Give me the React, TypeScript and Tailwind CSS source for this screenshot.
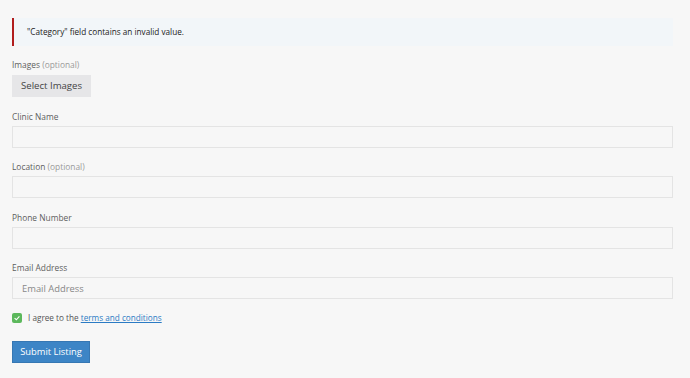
import { useState } from "react";

const fields = [
  { label: "Clinic Name", optional: false, placeholder: "", gap: "mt-[13px]" },
  { label: "Location", optional: true, placeholder: "", gap: "mt-[12px]" },
  { label: "Phone Number", optional: false, placeholder: "", gap: "mt-[13px]" },
  { label: "Email Address", optional: false, placeholder: "Email Address", gap: "mt-[12px]" },
];

export default function App() {
  const [agreed, setAgreed] = useState(true);

  return (
    <div className="min-h-screen bg-[#f7f7f7] text-[#333] font-['Open_Sans',sans-serif]">
      <div className="pl-[12px] pr-[17px] pt-[18px] pb-[15px]">
        {/* Error notice */}
        <div className="h-[28px] flex items-center bg-[#f2f6f9] border-l-2 border-[#b11d1d] pl-[13px]">
          <p className="text-[8.2px] text-[#222]">"Category" field contains an invalid value.</p>
        </div>

        {/* Images */}
        <div className="mt-[12px]">
          <label className="block text-[8.4px] leading-[14px] text-[#5e5e5e]">
            Images <span className="text-[#9a9a9a]">(optional)</span>
          </label>
          <button className="mt-[3px] block h-[22px] w-[79px] bg-[#e6e6e8] text-[9.6px] text-[#444]">
            Select Images
          </button>
        </div>

        {fields.map((f) => (
          <div key={f.label} className={f.gap}>
            <label className="block text-[8.4px] leading-[14px] text-[#5e5e5e]">
              {f.label} {f.optional && <span className="text-[#9a9a9a]">(optional)</span>}
            </label>
            <input
              type="text"
              placeholder={f.placeholder}
              className="mt-[2px] block h-[22px] w-full bg-[#f7f7f7] border border-[#e4e4e4] px-[9px] text-[9.4px] placeholder:text-[#888] outline-none"
            />
          </div>
        ))}

        {/* Terms */}
        <div className="mt-[13px] flex items-center h-[12px]">
          <button
            onClick={() => setAgreed(!agreed)}
            className={`w-[10px] h-[10px] rounded-[2px] flex items-center justify-center ${
              agreed ? "bg-[#5cb85c]" : "bg-white border border-[#ccc]"
            }`}
          >
            {agreed && (
              <svg viewBox="0 0 10 10" className="w-[8px] h-[8px]">
                <path d="M2 5.2 L4.2 7.2 L8 3" fill="none" stroke="white" strokeWidth="1.4" />
              </svg>
            )}
          </button>
          <span className="ml-[6px] text-[8.2px] text-[#555]">
            I agree to the{" "}
            <a href="#" className="text-[#2b7bc4] underline">
              terms and conditions
            </a>
          </span>
        </div>

        {/* Submit */}
        <button className="mt-[17px] block h-[22px] w-[78px] bg-[#3d85c6] border border-[#3677b3] text-white text-[9.4px]">
          Submit Listing
        </button>
      </div>
    </div>
  );
}
